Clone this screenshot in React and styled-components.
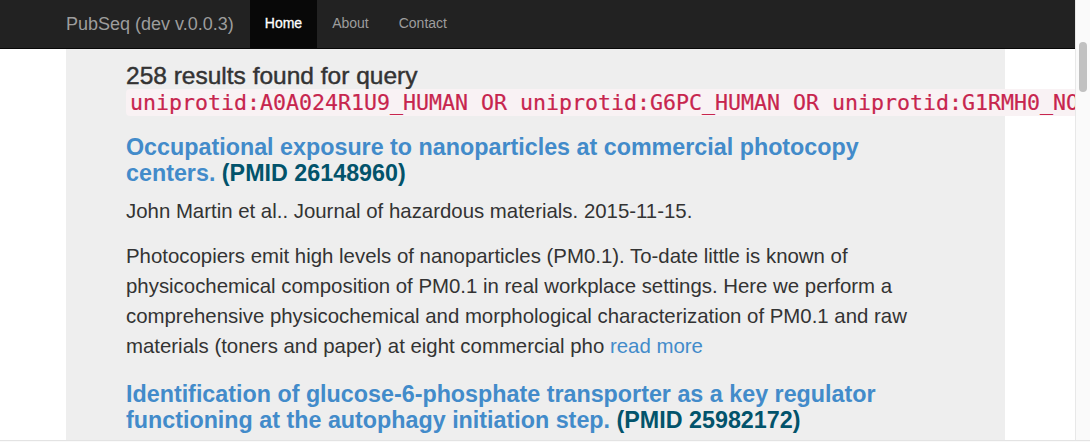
import styled, { createGlobalStyle } from 'styled-components'

const Global = createGlobalStyle`
  html, body { margin: 0; padding: 0; background: #fff; overflow: hidden; }
  body { font-family: "Liberation Sans", Arial, sans-serif; color: #333; }
  * { box-sizing: border-box; }
`;

const Frame = styled.div`
  width: 1090px;
  height: 442px;
  display: flex;
  flex-direction: column;
  overflow: hidden;
`;

const Main = styled.div`
  display: flex;
  height: 440px;
`;

const Viewport = styled.div`
  width: 1075px;
  height: 440px;
  overflow: hidden;
`;

const VTrack = styled.div`
  width: 15px;
  height: 440px;
  background: #fafafa;
  border-left: 1px solid #e8e8e8;
  padding: 42px 3px 0 3px;
`;

const Thumb = styled.div`
  width: 8px;
  height: 50px;
  border-radius: 4px;
  background: #c1c1c1;
`;

const HTrack = styled.div`
  height: 2px;
  background: #fafafa;
  border-top: 1px solid #e3e3e3;
`;

const Navbar = styled.nav`
  height: 49px;
  background: #222;
  border-bottom: 1px solid #080808;
  display: flex;
  padding-left: 66px;
`;

const Brand = styled.a`
  font-size: 18px;
  line-height: 48px;
  color: #9d9d9d;
  padding-right: 16px;
  text-decoration: none;
`;

const NavLink = styled.a`
  display: block;
  padding: 0 15px;
  font-size: 14px;
  line-height: 46px;
  color: ${p => (p.$active ? '#fff' : '#9d9d9d')};
  background: ${p => (p.$active ? '#080808' : 'transparent')};
  -webkit-text-stroke: ${p => (p.$active ? '0.3px #fff' : '0')};
  text-decoration: none;
`;

const Jumbotron = styled.div`
  margin-left: 66px;
  width: 939px;
  background: #eee;
  padding: 14px 60px 30px 60px;
  min-height: 400px;
`;

const Heading = styled.h3`
  margin: 0 0 -2px 0;
  font-size: 24.5px;
  font-weight: 500;
  line-height: 26px;
  color: #333;
  -webkit-text-stroke: 0.45px #333;
`;

const Query = styled.code`
  white-space: nowrap;
  font-family: "DejaVu Sans Mono", Menlo, monospace;
  font-size: 21.6px;
  font-weight: normal;
  color: #c7254e;
  background: #f9f2f4;
  padding: 1px 4px;
  border-radius: 4px;
  -webkit-text-stroke: 0.2px #c7254e;
`;

const Title = styled.h3`
  margin: 20px 0 10px 0;
  font-size: 23.3px;
  font-weight: bold;
  line-height: 26px;
`;

const TitleLink = styled.a`
  color: #428bca;
  text-decoration: none;
`;

const Pmid = styled.span`
  color: #02536b;
`;

const Para = styled.p`
  margin: 0 0 15px 0;
  font-size: 20.4px;
  line-height: 30px;
  color: #333;
`;

const More = styled.a`
  color: #428bca;
  text-decoration: none;
`;

const results = [
  {
    title: 'Occupational exposure to nanoparticles at commercial photocopy centers.',
    pmid: '26148960',
    cite: 'John Martin et al.. Journal of hazardous materials. 2015-11-15.',
    abstract:
      'Photocopiers emit high levels of nanoparticles (PM0.1). To-date little is known of physicochemical composition of PM0.1 in real workplace settings. Here we perform a comprehensive physicochemical and morphological characterization of PM0.1 and raw materials (toners and paper) at eight commercial pho',
  },
  {
    title: 'Identification of glucose-6-phosphate transporter as a key regulator functioning at the autophagy initiation step.',
    pmid: '25982172',
    cite: 'Yoshinori Ohsumi et al.. FEBS letters. 2015-07-08.',
    abstract: 'Autophagy is a bulk degradation process in eukaryotic cells.',
  },
];

export default function App() {
  return (
    <>
      <Global />
      <Frame>
        <Main>
          <Viewport>
            <Navbar>
              <Brand href="#">PubSeq (dev v.0.0.3)</Brand>
              <NavLink href="#" $active>Home</NavLink>
              <NavLink href="#">About</NavLink>
              <NavLink href="#">Contact</NavLink>
            </Navbar>
            <Jumbotron>
              <Heading>
                258 results found for query{' '}
                <Query>uniprotid:A0A024R1U9_HUMAN OR uniprotid:G6PC_HUMAN OR uniprotid:G1RMH0_NOMLE</Query>
              </Heading>
              {results.map(r => (
                <div key={r.pmid}>
                  <Title>
                    <TitleLink href="#">{r.title}</TitleLink> <Pmid>(PMID {r.pmid})</Pmid>
                  </Title>
                  <Para>{r.cite}</Para>
                  <Para>
                    {r.abstract} <More href="#">read more</More>
                  </Para>
                </div>
              ))}
            </Jumbotron>
          </Viewport>
          <VTrack>
            <Thumb />
          </VTrack>
        </Main>
        <HTrack />
      </Frame>
    </>
  );
}
